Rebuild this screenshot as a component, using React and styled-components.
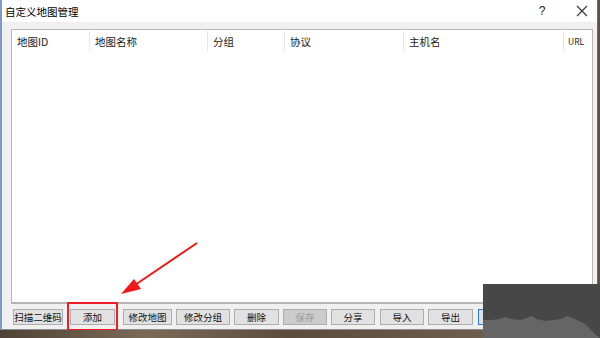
import React from 'react'
import styled, { createGlobalStyle } from 'styled-components'

const Global = createGlobalStyle`
  html, body { margin: 0; padding: 0; }
  body {
    width: 600px;
    height: 338px;
    overflow: hidden;
    font-family: "Noto Sans CJK SC", "Liberation Sans", sans-serif;
  }
`

const Screen = styled.div`
  position: relative;
  width: 600px;
  height: 338px;
  background: #5e5044;
  overflow: hidden;
`

const Window = styled.div`
  width: 595px;
  height: 329px;
  background: #f0f0f0;
  border-left: 2px solid #7d9cc4;
  border-right: 1px solid #5f6f82;
  border-bottom: 1px solid #8a8f96;
  display: flex;
  flex-direction: column;
`

const TitleBar = styled.div`
  height: 22px;
  background: #ffffff;
  display: flex;
  align-items: center;
  padding-left: 3px;
  font-size: 10.5px;
  color: #000;
`

const Title = styled.span`
  flex: 1;
`

const Help = styled.span`
  width: 30px;
  margin-right: 19px;
  text-align: center;
  font-size: 12px;
  color: #222;
  font-family: "Liberation Sans", sans-serif;
`

const Close = styled.svg`
  margin-right: 9px;
`

const Body = styled.div`
  flex: 1;
  display: flex;
  flex-direction: column;
  padding: 7px 4px 0 9px;
`

const Table = styled.div`
  height: 272px;
  background: #ffffff;
  border: 1px solid #b8b8b8;
  border-bottom: 2px solid #b4b4b4;
`

const HeaderRow = styled.div`
  display: flex;
  height: 22px;
  align-items: center;
`

const HeaderCell = styled.div`
  width: ${p => p.w}px;
  height: 20px;
  display: flex;
  align-items: center;
  padding-left: ${p => (p.small ? 4 : 5)}px;
  box-sizing: border-box;
  font-size: ${p => (p.small ? 8.5 : 10.5)}px;
  color: #1a1a1a;
  white-space: nowrap;
  border-right: ${p => (p.last ? 'none' : '1px solid #e6e6e6')};
`

const ButtonRow = styled.div`
  display: flex;
  padding: 5px 0 0 2px;
`

const Button = styled.div`
  position: relative;
  width: ${p => p.w}px;
  height: 16px;
  margin-left: ${p => p.gap}px;
  box-sizing: border-box;
  border: 1px solid ${p => (p.primary ? '#2b7bd6' : '#adadad')};
  background: ${p => (p.disabled ? '#cccccc' : '#e1e1e1')};
  color: ${p => (p.disabled ? '#9a9a9a' : '#111')};
  font-size: 9.5px;
  white-space: nowrap;
  display: flex;
  align-items: center;
  justify-content: center;
  flex-shrink: 0;
`

const Highlight = styled.div`
  position: absolute;
  left: -4px;
  top: -8px;
  right: -4px;
  bottom: -7px;
  border: 2px solid #ee1c24;
`

const Arrow = styled.svg`
  position: absolute;
  left: 110px;
  top: 235px;
`

const DarkPatch = styled.svg`
  position: absolute;
  left: 483px;
  top: 284px;
`

const Ground = styled.div`
  position: absolute;
  left: 0;
  bottom: 0;
  width: 483px;
  height: 8px;
  background: linear-gradient(90deg, #4f4236, #7a6a56 30%, #5c4c3c 60%, #6e5e4c);
`

const columns = [
  { label: '地图ID', w: 78 },
  { label: '地图名称', w: 118 },
  { label: '分组', w: 77 },
  { label: '协议', w: 119 },
  { label: '主机名', w: 160 },
  { label: 'URL', w: 26, small: true, last: true },
]

const buttons = [
  { label: '扫描二维码', w: 50, gap: 0 },
  { label: '添加', w: 45, gap: 7, mark: true },
  { label: '修改地图', w: 49, gap: 8 },
  { label: '修改分组', w: 54, gap: 4 },
  { label: '删除', w: 45, gap: 4 },
  { label: '保存', w: 44, gap: 4, disabled: true },
  { label: '分享', w: 44, gap: 4 },
  { label: '导入', w: 44, gap: 5 },
  { label: '导出', w: 45, gap: 4 },
  { label: '', w: 20, gap: 5, primary: true },
]

export default function App() {
  return (
    <Screen>
      <Global />
      <Window>
        <TitleBar>
          <Title>自定义地图管理</Title>
          <Help>?</Help>
          <Close width="12" height="12" viewBox="0 0 12 12">
            <path d="M1 1 L11 11 M11 1 L1 11" stroke="#333" strokeWidth="1.1" />
          </Close>
        </TitleBar>
        <Body>
          <Table>
            <HeaderRow>
              {columns.map(c => (
                <HeaderCell key={c.label} w={c.w} small={c.small} last={c.last}>
                  {c.label}
                </HeaderCell>
              ))}
            </HeaderRow>
          </Table>
          <ButtonRow>
            {buttons.map((b, i) => (
              <Button key={i} w={b.w} gap={b.gap} disabled={b.disabled} primary={b.primary}>
                {b.label}
                {b.mark && <Highlight />}
              </Button>
            ))}
          </ButtonRow>
        </Body>
      </Window>
      <Ground />
      <DarkPatch width="117" height="54" viewBox="0 0 117 54">
        <rect width="117" height="54" fill="#474747" />
        <path
          d="M0 36 L8 36 L16 35 L22 33 L28 35 L38 36 L44 34 L48 32 L54 35 L62 37 L70 36 L78 35 L84 32 L90 34 L96 37 L102 40 L106 44 L110 48 L114 52 L117 54 L0 54 Z"
          fill="#656565"
        />
      </DarkPatch>
      <Arrow width="100" height="70" viewBox="0 0 100 70">
        <line x1="87" y1="8" x2="22" y2="52" stroke="#f01818" strokeWidth="2" />
        <polygon points="11,59 24,44 31,54" fill="#f01818" />
      </Arrow>
    </Screen>
  )
}
